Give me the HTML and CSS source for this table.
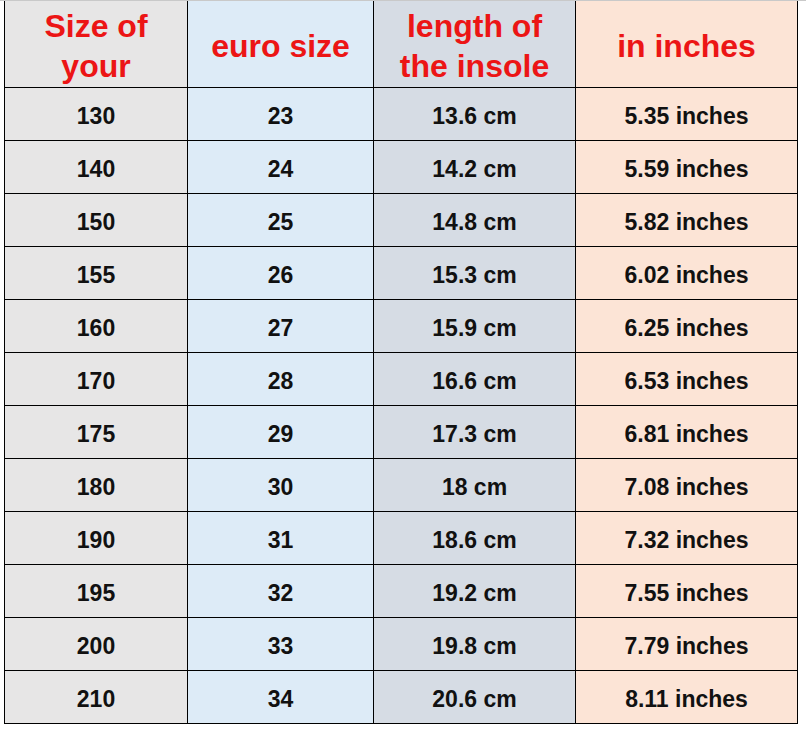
FILE: index.html
```html
<!DOCTYPE html>
<html>
<head>
<meta charset="utf-8">
<link rel="stylesheet" href="styles.css">
</head>
<body>
<div class="sheet">
  <div class="grid">
    <div class="cell head c1">Size of<br>your</div>
    <div class="cell head c2">euro size</div>
    <div class="cell head c3">length of<br>the insole</div>
    <div class="cell head c4">in inches</div>

    <div class="cell c1">130</div><div class="cell c2">23</div><div class="cell c3">13.6 cm</div><div class="cell c4">5.35 inches</div>
    <div class="cell c1">140</div><div class="cell c2">24</div><div class="cell c3">14.2 cm</div><div class="cell c4">5.59 inches</div>
    <div class="cell c1">150</div><div class="cell c2">25</div><div class="cell c3">14.8 cm</div><div class="cell c4">5.82 inches</div>
    <div class="cell c1">155</div><div class="cell c2">26</div><div class="cell c3">15.3 cm</div><div class="cell c4">6.02 inches</div>
    <div class="cell c1">160</div><div class="cell c2">27</div><div class="cell c3">15.9 cm</div><div class="cell c4">6.25 inches</div>
    <div class="cell c1">170</div><div class="cell c2">28</div><div class="cell c3">16.6 cm</div><div class="cell c4">6.53 inches</div>
    <div class="cell c1">175</div><div class="cell c2">29</div><div class="cell c3">17.3 cm</div><div class="cell c4">6.81 inches</div>
    <div class="cell c1">180</div><div class="cell c2">30</div><div class="cell c3">18 cm</div><div class="cell c4">7.08 inches</div>
    <div class="cell c1">190</div><div class="cell c2">31</div><div class="cell c3">18.6 cm</div><div class="cell c4">7.32 inches</div>
    <div class="cell c1">195</div><div class="cell c2">32</div><div class="cell c3">19.2 cm</div><div class="cell c4">7.55 inches</div>
    <div class="cell c1">200</div><div class="cell c2">33</div><div class="cell c3">19.8 cm</div><div class="cell c4">7.79 inches</div>
    <div class="cell c1">210</div><div class="cell c2">34</div><div class="cell c3">20.6 cm</div><div class="cell c4">8.11 inches</div>
  </div>
</div>
</body>
</html>
```
FILE: styles.css
```css
html, body {
  margin: 0;
  padding: 0;
  background: #ffffff;
}
body {
  font-family: "Liberation Sans", Arial, sans-serif;
}
.sheet {
  border-top: 1px solid #c9c9c9;
  padding-left: 4px;
  width: 806px;
  box-sizing: border-box;
}
.grid {
  display: grid;
  grid-template-columns: 182px 185px 201px 221px;
  grid-template-rows: 86px repeat(12, 52px);
  gap: 1px;
  background: #000000;
  padding: 0 1px 1px 1px;
  width: max-content;
}
.cell {
  display: flex;
  align-items: center;
  justify-content: center;
  text-align: center;
  font-weight: bold;
  font-size: 23px;
  color: #111111;
  padding-top: 5px;
}
.head {
  font-size: 32px;
  line-height: 40px;
  color: #ec1515;
  padding-top: 4px;
}
.c1 { background: #e7e6e6; }
.c2 { background: #ddebf7; }
.c3 { background: #d6dce4; }
.c4 { background: #fce4d6; }
```
